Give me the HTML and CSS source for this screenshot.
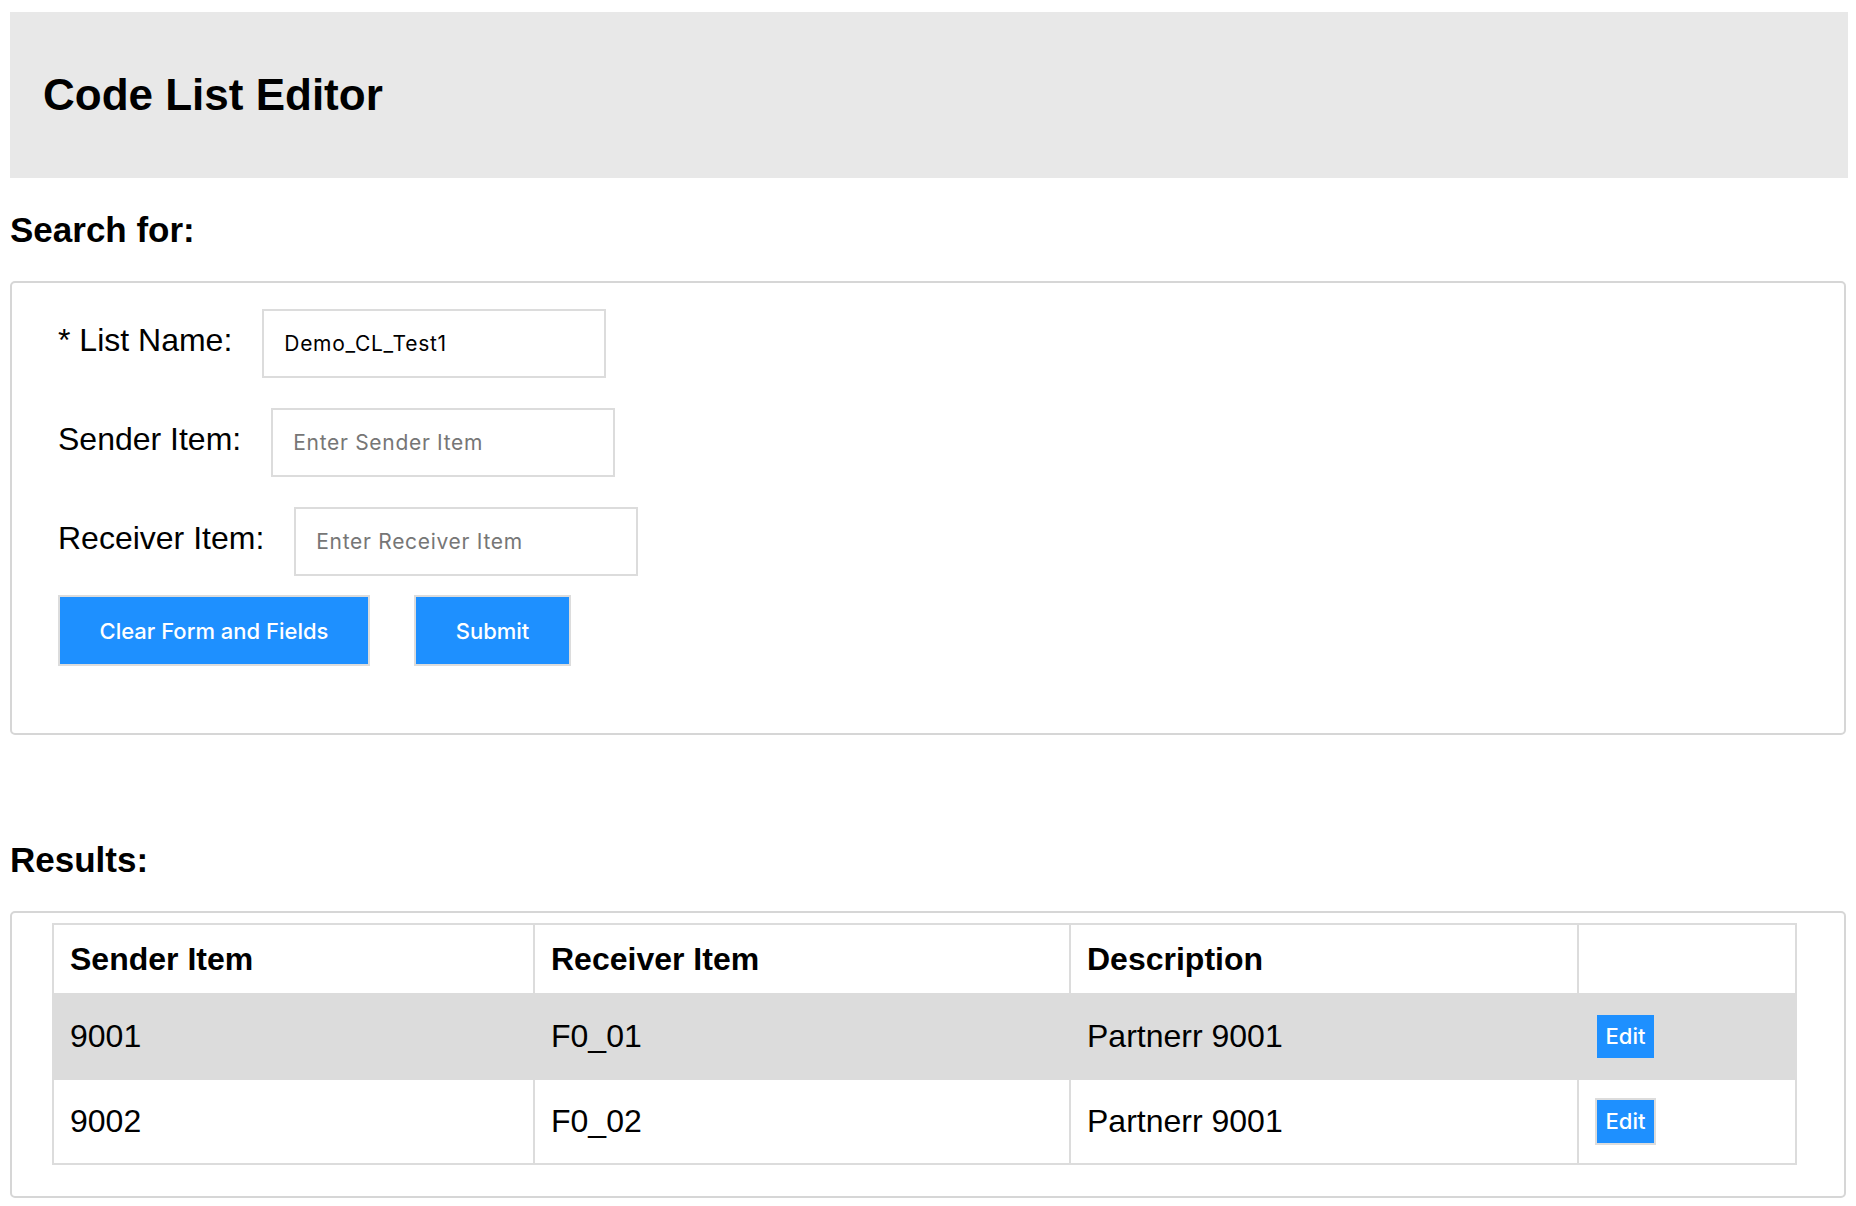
FILE: index.html
```html
<!DOCTYPE html>
<html>
<head>
<meta charset="utf-8">
<title>Code List Editor</title>
<link rel="stylesheet" href="styles.css">
</head>
<body>
<header class="topbar">
  <h1 class="title">Code List Editor</h1>
</header>

<h2 class="section-title search-title">Search for:</h2>
<form class="panel search-panel">
  <div class="field-row">
    <label class="field-label">* List Name:</label>
    <input class="field-input" type="text" value="Demo_CL_Test1">
  </div>
  <div class="field-row">
    <label class="field-label">Sender Item:</label>
    <input class="field-input" type="text" placeholder="Enter Sender Item">
  </div>
  <div class="field-row">
    <label class="field-label">Receiver Item:</label>
    <input class="field-input" type="text" placeholder="Enter Receiver Item">
  </div>
  <div class="button-row">
    <button type="button" class="btn btn-clear">Clear Form and Fields</button>
    <button type="button" class="btn btn-submit">Submit</button>
  </div>
</form>

<h2 class="section-title results-title">Results:</h2>
<div class="panel results-panel">
  <table class="results">
    <colgroup>
      <col class="c1"><col class="c2"><col class="c3"><col class="c4">
    </colgroup>
    <thead>
      <tr><th>Sender Item</th><th>Receiver Item</th><th>Description</th><th></th></tr>
    </thead>
    <tbody>
      <tr class="alt"><td>9001</td><td>F0_01</td><td>Partnerr 9001</td><td><button type="button" class="edit">Edit</button></td></tr>
      <tr><td>9002</td><td>F0_02</td><td>Partnerr 9001</td><td><button type="button" class="edit">Edit</button></td></tr>
    </tbody>
  </table>
</div>
</body>
</html>
```

FILE: styles.css
```css
html, body {
  margin: 0;
  padding: 0;
}
body {
  padding: 12px 8px 10px 10px;
  font-family: "Liberation Sans", Arial, sans-serif;
  color: #000;
  background: #fff;
}
.topbar {
  background: #e8e8e8;
  height: 166px;
  box-sizing: border-box;
  padding: 58px 0 0 33px;
}
.title {
  margin: 0;
  font-size: 44px;
  line-height: 50px;
  font-weight: bold;
}
.section-title {
  margin: 0;
  font-size: 35px;
  line-height: 40px;
  font-weight: bold;
}
.search-title {
  margin-top: 32px;
  margin-bottom: 31px;
}
.results-title {
  margin-top: 105px;
  margin-bottom: 31px;
}
.panel {
  margin: 0 2px 0 0;
  border: 2px solid #d6d6d6;
  border-radius: 5px;
}
.search-panel {
  height: 454px;
  box-sizing: border-box;
  padding: 26px 46px 0 46px;
}
.field-row {
  display: flex;
  align-items: baseline;
  gap: 30px;
  margin-bottom: 30px;
}
.field-row:nth-child(3) {
  margin-bottom: 19px;
}
.field-label {
  font-size: 32px;
  line-height: 37px;
}
.field-input {
  width: 344px;
  height: 69px;
  box-sizing: border-box;
  border: 2px solid #dcdcdc;
  border-radius: 0;
  padding: 0 20px;
  font-family: Inter, "Noto Sans", sans-serif;
  font-size: 21px;
  letter-spacing: 0.7px;
  color: #000;
  outline: none;
}
.field-input::placeholder {
  color: #767676;
}
.button-row {
  display: flex;
  gap: 44px;
}
.btn {
  height: 71px;
  box-sizing: border-box;
  border: 2px solid #dcdcdc;
  background: #1e90ff;
  color: #fff;
  font-family: Inter, "Noto Sans", sans-serif;
  font-size: 22px;
  font-weight: 500;
  padding: 0;
  cursor: pointer;
}
.btn-clear {
  width: 312px;
}
.btn-submit {
  width: 157px;
}
.results-panel {
  padding: 10px 49px 31px 40px;
}
.results {
  border-collapse: collapse;
  table-layout: fixed;
  width: 1743px;
  border: 2px solid #dcdcdc;
}
.results col.c1 { width: 481px; }
.results col.c2 { width: 536px; }
.results col.c3 { width: 508px; }
.results col.c4 { width: 218px; }
.results th,
.results td {
  border: 2px solid #dcdcdc;
  text-align: left;
  vertical-align: middle;
  padding: 0 16px;
  font-size: 32px;
  line-height: 37px;
}
.results th {
  height: 68px;
  font-weight: bold;
}
.results td {
  height: 83px;
}
.results tr.alt td {
  background: #dcdcdc;
}
.edit {
  background: #1e90ff;
  color: #fff;
  border: 2px solid #dcdcdc;
  font-family: Inter, "Noto Sans", sans-serif;
  font-size: 22px;
  font-weight: 500;
  line-height: 25px;
  padding: 0;
  width: 61px;
  height: 47px;
  box-sizing: border-box;
}
```
